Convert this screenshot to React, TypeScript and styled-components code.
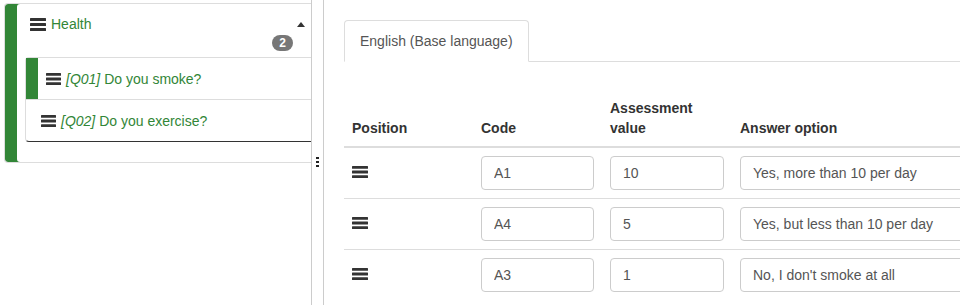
import styled, { createGlobalStyle } from "styled-components";

const GlobalStyle = createGlobalStyle`
  html, body, #root {
    height: 100%;
  }
  body {
    margin: 0;
    background: #fff;
    font-family: "Liberation Sans", Arial, sans-serif;
    font-size: 14px;
    line-height: 20px;
    color: #333;
  }
  * {
    box-sizing: border-box;
  }
`;

const green = "#328637";

const Page = styled.div`
  display: flex;
  height: 100%;
  overflow: hidden;
`;

const Sidebar = styled.aside`
  flex: 0 0 312px;
  padding: 3px 0 0 4px;
  border-right: 1px solid #ccc;
`;

const GroupPanel = styled.div`
  border: 1px solid #ddd;
  border-right: none;
  border-radius: 4px 0 0 4px;
  box-shadow: inset 12px 0 0 ${green};
`;

const GroupHeading = styled.div`
  display: flex;
  justify-content: space-between;
  padding: 10px 6px 6px 25px;
`;

const HeadingTitle = styled.div`
  display: flex;
  align-items: center;
  gap: 5px;
  height: 20px;
  color: ${green};
`;

const HeadingSide = styled.div`
  display: flex;
  flex-direction: column;
  align-items: flex-end;
`;

const Caret = styled.span`
  width: 0;
  height: 0;
  margin-top: 8px;
  border-left: 4px solid transparent;
  border-right: 4px solid transparent;
  border-bottom: 5px solid #333;
`;

const Badge = styled.span`
  margin: 8px 12px 0 0;
  padding: 2px 7px;
  border-radius: 10px;
  background: #777;
  color: #fff;
  font-size: 12px;
  font-weight: bold;
  line-height: 12px;
`;

const QuestionList = styled.div`
  margin: 0 0 20px 20px;
  border: 1px solid #ddd;
  border-right: none;
  border-bottom-color: #333;
  border-radius: 4px 0 0 4px;
`;

const QuestionItem = styled.div<{ $active?: boolean }>`
  display: flex;
  align-items: center;
  gap: 5px;
  padding: 11px 10px 10px ${(p) => (p.$active ? "20px" : "15px")};
  color: ${green};
  box-shadow: ${(p) => (p.$active ? `inset 12px 0 0 ${green}` : "none")};

  & + & {
    border-top: 1px solid #ddd;
  }
`;

const Code = styled.em`
  font-style: italic;
`;

const Splitter = styled.div`
  flex: 0 0 11px;
  display: flex;
  justify-content: center;
  align-items: flex-start;
  padding-top: 157px;
`;

const Main = styled.main`
  flex: 1;
  min-width: 0;
  overflow: hidden;
  border-left: 1px solid #ccc;
  padding: 20px 0 0 20px;
`;

const Tabs = styled.div`
  display: flex;
  border-bottom: 1px solid #ddd;
`;

const Tab = styled.div`
  margin-bottom: -1px;
  padding: 10px 15px;
  border: 1px solid #ddd;
  border-bottom-color: #fff;
  border-radius: 4px 4px 0 0;
  background: #fff;
  color: #555;
`;

const AnswerTable = styled.table`
  width: 760px;
  margin-top: 28px;
  border-collapse: collapse;
  table-layout: fixed;
`;

const HeadCell = styled.th<{ $width?: number }>`
  width: ${(p) => (p.$width ? `${p.$width}px` : "auto")};
  padding: 8px;
  vertical-align: bottom;
  text-align: left;
  font-weight: bold;
  color: #333;
  border-bottom: 2px solid #ddd;
`;

const Row = styled.tr`
  border-bottom: 1px solid #ddd;

  &:last-child {
    border-bottom: none;
  }
`;

const Cell = styled.td`
  padding: 8px;
  vertical-align: middle;
`;

const TextInput = styled.input`
  display: block;
  width: 100%;
  height: 34px;
  padding: 6px 12px;
  border: 1px solid #ccc;
  border-radius: 4px;
  font-family: inherit;
  font-size: 14px;
  color: #555;
  background: #fff;
`;

function Bars({ width = 16, height = 12 }: { width?: number; height?: number }) {
  const bar = height / 4.2;
  const step = (height - bar) / 2;
  return (
    <svg width={width} height={height} viewBox={`0 0 ${width} ${height}`}>
      {[0, 1, 2].map((i) => (
        <rect key={i} x={0} y={i * step} width={width} height={bar} rx={0.5} fill="#333" />
      ))}
    </svg>
  );
}

function DragHandle() {
  return (
    <svg width={3} height={10} viewBox="0 0 3 10">
      <rect x={0} y={0} width={3} height={2} fill="#222" />
      <rect x={0} y={4} width={3} height={2} fill="#222" />
      <rect x={0} y={8} width={3} height={2} fill="#222" />
    </svg>
  );
}

const questions = [
  { code: "Q01", text: "Do you smoke?", active: true },
  { code: "Q02", text: "Do you exercise?", active: false },
];

const answers = [
  { code: "A1", value: "10", option: "Yes, more than 10 per day" },
  { code: "A4", value: "5", option: "Yes, but less than 10 per day" },
  { code: "A3", value: "1", option: "No, I don't smoke at all" },
];

export default function App() {
  return (
    <>
      <GlobalStyle />
      <Page>
        <Sidebar>
          <GroupPanel>
            <GroupHeading>
              <HeadingTitle>
                <Bars width={16} height={13} />
                Health
              </HeadingTitle>
              <HeadingSide>
                <Caret />
                <Badge>2</Badge>
              </HeadingSide>
            </GroupHeading>
            <QuestionList>
              {questions.map((q) => (
                <QuestionItem key={q.code} $active={q.active}>
                  <Bars width={15} height={12} />
                  <span>
                    <Code>[{q.code}]</Code> {q.text}
                  </span>
                </QuestionItem>
              ))}
            </QuestionList>
          </GroupPanel>
        </Sidebar>
        <Splitter>
          <DragHandle />
        </Splitter>
        <Main>
          <Tabs>
            <Tab>English (Base language)</Tab>
          </Tabs>
          <AnswerTable>
            <thead>
              <tr>
                <HeadCell $width={129}>Position</HeadCell>
                <HeadCell $width={129}>Code</HeadCell>
                <HeadCell $width={130}>
                  Assessment
                  <br />
                  value
                </HeadCell>
                <HeadCell>Answer option</HeadCell>
              </tr>
            </thead>
            <tbody>
              {answers.map((a) => (
                <Row key={a.code}>
                  <Cell>
                    <Bars width={16} height={12} />
                  </Cell>
                  <Cell>
                    <TextInput defaultValue={a.code} />
                  </Cell>
                  <Cell>
                    <TextInput defaultValue={a.value} />
                  </Cell>
                  <Cell>
                    <TextInput defaultValue={a.option} />
                  </Cell>
                </Row>
              ))}
            </tbody>
          </AnswerTable>
        </Main>
      </Page>
    </>
  );
}
